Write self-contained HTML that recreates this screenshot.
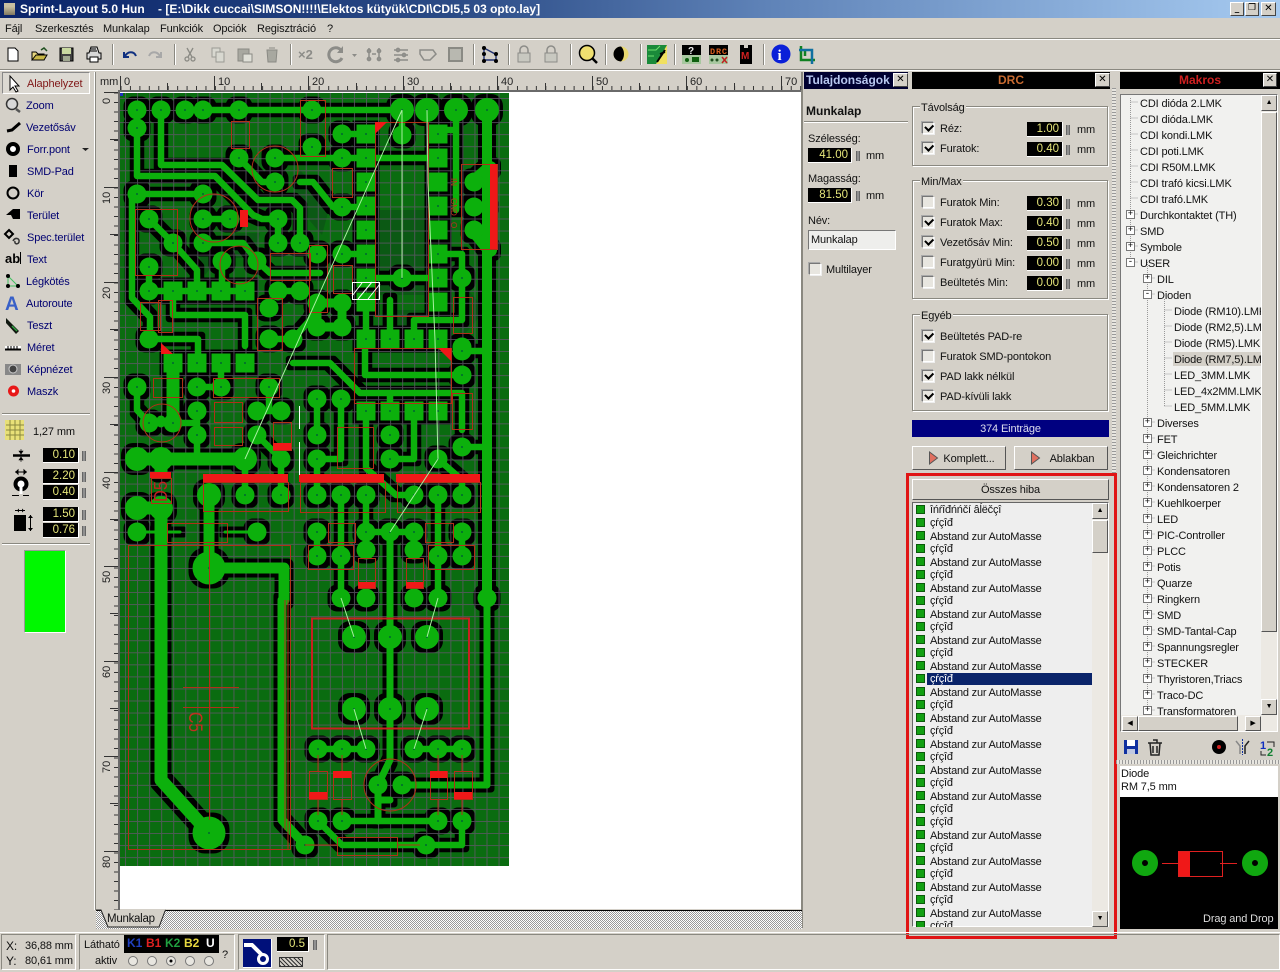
<!DOCTYPE html>
<html><head><meta charset="utf-8"><title>Sprint-Layout</title>
<style>
html,body{margin:0;padding:0;width:1280px;height:972px;overflow:hidden;background:#d4d0c8}
body{position:relative;font:11px "Liberation Sans",sans-serif;letter-spacing:-.13px;color:#111}
svg text{letter-spacing:0}
.t{position:absolute;white-space:nowrap;line-height:14px;margin-top:1px}
.b{position:absolute;box-sizing:border-box}
.n{color:#000070}
.f{position:absolute;box-sizing:border-box;background:#000;color:#e6e67a;text-align:right;padding-right:3px;font-size:11.5px;line-height:15px;height:15px;border-right:1px solid #fff;border-bottom:1px solid #fff;letter-spacing:0}
.s{position:absolute;width:4px;height:10px;margin-top:1px;background:linear-gradient(90deg,#666 0,#666 40%,#bbb 40%,#bbb 60%,#666 60%)}
.c{position:absolute;box-sizing:border-box;width:12px;height:12px;background:#e8e6e0;border:1px solid;border-color:#777 #fff #fff #777;box-shadow:-1px -1px 0 #aaa,1px 1px 0 #eee}
.c.k:after{content:"";position:absolute;left:1.5px;top:.5px;width:6px;height:3.5px;border:solid #000;border-width:0 0 2px 2px;transform:rotate(-45deg)}
.g{position:absolute;box-sizing:border-box;border:1px solid #8a8880;box-shadow:1px 1px 0 #fff,inset 1px 1px 0 #fff}
.lg{position:absolute;background:#d4d0c8;padding:0 1px;line-height:13px;white-space:nowrap;margin-top:1px}
.btn{position:absolute;box-sizing:border-box;background:#d4d0c8;border:1px solid;border-color:#fff #555 #555 #fff;text-align:center}
.l{position:absolute;left:930px;line-height:13px;white-space:nowrap;font-size:11px;letter-spacing:-.22px;color:#111;margin-top:1px}
.q{position:absolute;left:916px;width:9px;height:9px;background:#12a012;box-shadow:inset 0 0 0 1px #0a5a0a}
.h{position:absolute;height:17px;background:#000;font-weight:bold;text-align:center;line-height:16px;font-size:12px;letter-spacing:0}
.x{position:absolute;width:15px;height:14px;background:#d4d0c8;box-sizing:border-box;border:1px solid;border-color:#fff #444 #444 #fff;color:#000;font:bold 10px/12px "DejaVu Sans",sans-serif;text-align:center;letter-spacing:0}
.tr{position:absolute;left:1140px;line-height:14px;white-space:nowrap;font-size:11px;color:#111;margin-top:1px}
.pl{position:absolute;box-sizing:border-box;width:9px;height:9px;border:1px solid #777;background:#fff;font:9px/7px "Liberation Mono",monospace;text-align:center;color:#000;letter-spacing:0}
.sb{position:absolute;box-sizing:border-box;background:#d4d0c8;border:1px solid;border-color:#fff #555 #555 #fff;color:#000;font-size:7px;line-height:13px;text-align:center}
</style></head><body>

<!-- title bar -->
<div class="b" style="left:0;top:0;width:1280px;height:18px;background:linear-gradient(90deg,#0a246a 0,#2a4a85 35%,#5f83b8 60%,#a6caf0 100%)"></div>
<div class="t" style="left:20px;top:1px;color:#fff;font:bold 12px/14px 'Liberation Sans',sans-serif;letter-spacing:0;white-space:pre">Sprint-Layout 5.0 Hun    - [E:\Dikk cuccai\SIMSON!!!!\Elektos kütyük\CDI\CDI5,5 03 opto.lay]</div>
<div class="b" style="left:4px;top:3px;width:11px;height:12px;background:linear-gradient(#c9c0a0 30%,#807860)"></div>
<div class="x" style="left:1230px;top:2px;width:14px;font-size:9px;line-height:13px">_</div>
<div class="x" style="left:1245px;top:2px;width:14px;font-size:9px;line-height:11px">❐</div>
<div class="x" style="left:1261px;top:2px;width:15px">✕</div>

<!-- menu -->
<div class="t" style="left:5px;top:21px">Fájl</div>
<div class="t" style="left:35px;top:21px">Szerkesztés</div>
<div class="t" style="left:103px;top:21px">Munkalap</div>
<div class="t" style="left:160px;top:21px">Funkciók</div>
<div class="t" style="left:213px;top:21px">Opciók</div>
<div class="t" style="left:257px;top:21px">Regisztráció</div>
<div class="t" style="left:327px;top:21px">?</div>
<div class="b" style="left:0;top:38px;width:1280px;height:2px;border-top:1px solid #8a8880;border-bottom:1px solid #fff"></div>
<div class="b" style="left:0;top:69px;width:1280px;height:2px;border-top:1px solid #8a8880;border-bottom:1px solid #fff"></div>

<!-- canvas -->
<div class="b" style="left:120px;top:92px;width:682px;height:817px;background:#fff"></div>
<div class="b" style="left:118px;top:90px;width:684px;height:2px;background:#6a6a6a"></div>
<div class="b" style="left:118px;top:90px;width:2px;height:820px;background:#6a6a6a"></div>
<div class="b" style="left:95px;top:72px;width:1px;height:838px;background:#8a8880;box-shadow:-1px 0 0 #fff"></div>
<div class="b" style="left:801px;top:72px;width:2px;height:856px;background:#8a8880"></div>

<svg width="1280" height="972" style="position:absolute;left:0;top:0">
<defs>
<clipPath id="bc"><rect x="120" y="93" width="389" height="773"/></clipPath>
<pattern id="gr" x="125" y="98" width="12.05" height="12.05" patternUnits="userSpaceOnUse"><path d="M.5 0V12.05M0 .5H12.05" stroke="#5f5868" stroke-opacity=".8" stroke-width="1" fill="none"/></pattern>
<pattern id="ht" width="2" height="2" patternUnits="userSpaceOnUse"><rect width="2" height="2" fill="#fff"/><rect width="1" height="1" fill="#999"/><rect x="1" y="1" width="1" height="1" fill="#999"/></pattern>
<pattern id="mt" width="9.44" height="4" x="120.5" y="86" patternUnits="userSpaceOnUse"><rect width="1" height="4" fill="#333"/></pattern>
<pattern id="mv" width="4" height="9.5" x="114" y="92.5" patternUnits="userSpaceOnUse"><rect width="4" height="1" fill="#333"/></pattern>
<filter id="halo" filterUnits="userSpaceOnUse" x="100" y="80" width="430" height="800"><feMorphology in="SourceAlpha" operator="dilate" radius="4" result="d"/><feFlood flood-color="#000"/><feComposite in2="d" operator="in"/></filter>
<g id="cu" fill="none" stroke="#0cb00c" stroke-linecap="round" stroke-linejoin="round">
<g stroke-width="6.5">
<path d="M203 110H312M312 110H402M161 110V165H222L258 200H292L300 208V243M137 128V176H215L253 215L262 219H278M137 194H203M132 197V298L150 317V339M149 219L173 243L197 270V291M203 219H230M239 158L262 182H275M275 158H342M203 243H243L257 261L270 273H320M222 261V291M278 219V243M149 267V291H173M173 291H245M173 291V315H245V346M149 339H198V358M278 291H300M269 339H293M293 339L310 320L317 303M300 182H313L333 207H342M342 134H366M342 158H438M342 207H366M342 254H366"/>
<path d="M293 363H330L360 393H452L462 393V430M462 447H487M462 351H487M462 375H365V348M390 393V411M366 411V468L396 495H414M414 411V459H390M341 399V459H317M317 399V435M317 459V495M341 495V598M366 495V532M438 459L462 480V495M438 495V598M317 532V556M366 532H414M366 532V550M414 532V550M462 532V556M402 110V135M456 110V210M456 130H438M366 278H438M438 254H462V278M462 278V320H414V339M390 300V339M366 302V339M137 387V410L149 423M173 363V423H197M197 411V459M197 387H221M221 363V387M257 411H281M269 387V411M257 435L281 459V495M245 459V495M318 749H366M414 749H462M342 821H438M318 821L342 845H462V821"/>
</g>
<g stroke-width="3"><path d="M137 532H180M225 532H257"/></g>
<path stroke-width="7" d="M390 532V760L378 785V821M378 800H390M402 785H487V598"/>
<path stroke-width="10" d="M487 110V598"/>
<path stroke-width="11" d="M209 495V568M209 568H284V600"/>
<path stroke-width="9" d="M282 600V820L305 845"/>
<path stroke-width="13" d="M137 459H245M161 459V472M161 508V780L209 833M137 508H161M173 363V420"/>
<path stroke-width="9" d="M474 207H490M161 420V423M317 303V327M342 303V327M317 303H342M317 327H342"/>
<path stroke-width="14" d="M474 182L490 168M474 230L490 250"/>
<!-- pads -->
<path stroke-width="19" d="M137 110h0M161 110h0M185 110h0M203 110h0M239 110h0M312 110h0M137 128h0M312 147h0M239 158h0M275 158h0M275 182h0M137 194h0M203 194h0M149 219h0M203 219h0M230 219h0M278 219h0M173 243h0M203 243h0M278 243h0M300 243h0M149 267h0M222 261h0M257 261h0M149 291h0M278 291h0M300 291h0M269 308h0M149 339h0M269 339h0M293 339h0M342 134h0M342 158h0M342 207h0M342 254h0M317 254h0M402 135h0M402 278h0M474 182h0M474 207h0M474 230h0M462 278h0M462 347h0M317 303h0M342 303h0M317 327h0M342 327h0M137 387h0M197 387h0M221 387h0M269 387h0M197 411h0M257 411h0M281 411h0M149 423h0M173 423h0M197 435h0M257 435h0M281 459h0M245 495h0M281 495h0M137 532h0M257 532h0M462 351h0M462 375h0M317 399h0M341 399h0M317 435h0M390 435h0M462 447h0M317 459h0M390 459h0M438 459h0M317 495h0M341 495h0M366 495h0M414 495h0M438 495h0M462 495h0M317 532h0M366 532h0M390 532h0M414 532h0M462 532h0M317 556h0M341 556h0M366 550h0M414 550h0M438 556h0M462 556h0M341 598h0M366 598h0M414 598h0M438 598h0M487 598h0M318 749h0M342 749h0M366 749h0M414 749h0M438 749h0M462 749h0M378 785h0M402 785h0M318 821h0M342 821h0M438 821h0M462 821h0M305 845h0M426 845h0"/>
<path stroke-width="24" d="M137 459h0M161 459h0M245 459h0M137 508h0M161 508h0M209 495h0M354 637h0M390 637h0M427 637h0M354 709h0M390 709h0M427 709h0M402 110h0M427 110h0M456 110h0M487 110h0"/>
<path stroke-width="33" d="M209 568h0M209 833h0"/>
<g stroke-linecap="square" stroke-width="19"><path d="M173 291h0M197 291h0M221 291h0M245 291h0M366 134h0M366 158h0M366 182h0M366 206h0M366 230h0M366 254h0M366 278h0M366 302h0M438 134h0M438 158h0M438 182h0M438 206h0M438 230h0M438 254h0M438 278h0M438 302h0M366 339h0M390 339h0M414 339h0M438 339h0M173 363h0M197 363h0M221 363h0M245 363h0M366 411h0M390 411h0M414 411h0M438 411h0"/></g>
</g>
</defs>
<g clip-path="url(#bc)">
<rect x="120" y="93" width="389" height="773" fill="#0a6c10"/>
<path fill="#0b5914" d="M300 170l30 35-8 30-30-35zM380 210h45v85h-45zM232 233h28l-6 25h-22zM382 310h46v28h-46zM460 280l25 30-25 30zM195 240l30 10-20 25zM420 470l20 25-30 0z"/>
<use href="#cu" filter="url(#halo)"/>
<rect x="120" y="93" width="389" height="773" fill="url(#gr)"/>
<use href="#cu"/>
<path fill="none" stroke="#063" stroke-width="2" stroke-linecap="round" d="M137 110h0M161 110h0M185 110h0M203 110h0M239 110h0M312 110h0M137 128h0M312 147h0M239 158h0M275 158h0M275 182h0M137 194h0M203 194h0M149 219h0M203 219h0M230 219h0M278 219h0M173 243h0M203 243h0M278 243h0M300 243h0M149 267h0M149 291h0M173 291h0M197 291h0M221 291h0M245 291h0M366 134h0M366 158h0M366 182h0M366 206h0M366 230h0M366 254h0M366 278h0M438 134h0M438 158h0M438 206h0M438 254h0M438 278h0M366 339h0M390 339h0M414 339h0M438 339h0M402 110h0M427 110h0M456 110h0M487 110h0M342 134h0M342 158h0M342 207h0M342 254h0M317 254h0M402 278h0M462 278h0M173 363h0M197 363h0M221 363h0M245 363h0M366 411h0M390 411h0M414 411h0M438 411h0M137 387h0M197 387h0M221 387h0M269 387h0M197 411h0M149 423h0M173 423h0M197 435h0M281 495h0M245 495h0M209 568h0M209 833h0M354 637h0M390 637h0M427 637h0M354 709h0M390 709h0M427 709h0M318 749h0M342 749h0M366 749h0M414 749h0M438 749h0M462 749h0M378 785h0M402 785h0M318 821h0M342 821h0M438 821h0M462 821h0M305 845h0M426 845h0M317 495h0M341 495h0M366 495h0M414 495h0M438 495h0M462 495h0M317 532h0M366 532h0M390 532h0M414 532h0M462 532h0M317 556h0M341 556h0M438 556h0M462 556h0M462 351h0M462 375h0M317 399h0M341 399h0M317 435h0M390 435h0M462 447h0M317 459h0M390 459h0M438 459h0"/>
<!-- silk -->
<g fill="none" stroke="#b03018" stroke-width="1">
<path d="M231.500 121.500h18v27h-18zM300.500 100.500h25v56h-25zM135.500 209.500h42v66h-42zM140.500 302.500h20v28h-20zM257.500 298.500h25v52h-25zM270.500 253.500h40v27h-40zM158.500 300.500h14v32h-14zM332.500 168.500h20v29h-20zM461.500 164.500h36v85h-36zM375.500 122.500h53v194h-53zM453.500 297.500h19v36h-19zM309.500 245.500h18v67h-18zM333.500 265.500h19v28h-19z"/>
<path d="M153.500 378.500h29v19h-29zM213.500 378.500h66v19h-66zM214.500 402.500h28v20h-28zM214.500 427.500h28v18h-28zM273.500 422.500h18v28h-18zM151.500 478.500h20v25h-20zM203.500 482.500h85v29h-85zM167.500 523.500h60v19h-60zM128.500 545.500h162v304h-162zM209.500 545V820M183 687.500h56M183 707.500h56M337.500 427.500h36v41h-36zM354.500 348.500h97v55h-97zM452.500 393.500h20v36h-20zM300.500 482.500h85v30h-85zM397.500 482.500h83v30h-83zM328.500 523.500h27v19h-27zM425.500 523.500h28v19h-28zM308.500 545.500h45v24h-45zM428.500 545.500h46v24h-46zM358.500 558.500h17v30h-17zM406.500 558.500h17v30h-17zM309.500 771.500h18v28h-18zM333.500 771.500h18v28h-18zM430.500 771.500h17v28h-17zM454.500 771.500h18v28h-18zM337.500 837.500h60v18h-60zM318 755v16M342 755v16M438 755v16M462 755v16M318 799v16M342 799v16M438 799v16M462 799v16M288 600V849M285 600V830M305 845H337M397 845H420"/>
<circle cx="275" cy="169" r="23"/><circle cx="214" cy="218" r="24"/><circle cx="239" cy="265" r="19"/><circle cx="162" cy="423" r="19"/><circle cx="390" cy="785" r="26"/>
</g>
<rect x="312" y="618.500" width="157" height="110" fill="none" stroke="#c82020" stroke-width="2"/>
<text transform="translate(189,712) rotate(90)" font-family="Liberation Sans" font-size="19" fill="#c03020" textLength="20" lengthAdjust="spacingAndGlyphs">C5</text>
<text transform="translate(167,502) rotate(-90)" font-family="Liberation Sans" font-size="18" fill="#c02020" textLength="21" lengthAdjust="spacingAndGlyphs">D5</text>
<text transform="translate(451,178) rotate(90)" font-family="Liberation Sans" font-size="8" fill="#c03020">IN</text>
<text transform="translate(451,198) rotate(90)" font-family="Liberation Sans" font-size="8" fill="#c03020">GND</text>
<text transform="translate(451,222) rotate(90)" font-family="Liberation Sans" font-size="8" fill="#c03020">O</text>
<g fill="#f01818">
<path d="M375 122h12l-12 12zM161 343v11h12zM438 348h13v13z"/>
<rect x="490" y="164" width="7" height="85"/><rect x="240" y="210" width="8" height="17"/>
<rect x="150" y="472" width="21" height="6"/><rect x="203" y="474" width="85" height="8"/><rect x="299" y="474" width="85" height="8"/><rect x="396" y="474" width="84" height="8"/>
<rect x="273" y="443" width="18" height="7"/><rect x="358" y="582" width="17" height="6"/><rect x="406" y="582" width="17" height="6"/>
<rect x="309" y="792" width="18" height="7"/><rect x="333" y="771" width="18" height="7"/><rect x="430" y="771" width="17" height="7"/><rect x="454" y="792" width="18" height="7"/>
</g>
<g fill="none" stroke="#a8f0a0" stroke-width="1">
<path d="M402 110L245 459M402 110V278M427 110L428 183L435 340L438 459L390 532M341 598L354 637M438 598L427 637M354 709L366 749M427 709L414 749"/>
</g>
<path d="M299.500 406V429M299.500 442V475" stroke="#fff" fill="none"/>
<g fill="none" stroke="#fff"><rect x="352.500" y="282.500" width="27" height="17"/><path d="M352 296l10-13M358 299l14-17M368 299l12-15"/></g>
<rect x="120" y="93" width="3" height="3" fill="#2030c0"/>
</g>

<!-- rulers -->
<rect x="120" y="86" width="682" height="4" fill="url(#mt)"/>
<g stroke="#333" fill="none"><path d="M120.500 76V90M214.500 76V90M308.500 76V90M403.500 76V90M497.500 76V90M592.500 76V90M686.500 76V90M781.500 76V90M167.500 83V90M261.500 83V90M356.500 83V90M450.500 83V90M545.500 83V90M639.500 83V90M734.500 83V90"/></g>
<g font-family="Liberation Sans" font-size="11" fill="#222"><text x="100" y="85">mm</text><text x="124" y="85">0</text><text x="218" y="85">10</text><text x="312" y="85">20</text><text x="407" y="85">30</text><text x="501" y="85">40</text><text x="596" y="85">50</text><text x="690" y="85">60</text><text x="785" y="85">70</text></g>
<rect x="114" y="92" width="4" height="818" fill="url(#mv)"/>
<g stroke="#333" fill="none"><path d="M104 92.500H118M104 187.500H118M104 282.500H118M104 377.500H118M104 472.500H118M104 566.500H118M104 661.500H118M104 756.500H118M104 851.500H118M110 139.500H118M110 234.500H118M110 329.500H118M110 424.500H118M110 519.500H118M110 613.500H118M110 708.500H118M110 803.500H118"/></g>
<g font-family="Liberation Sans" font-size="11" fill="#222">
<text transform="translate(110,104) rotate(-90)">0</text><text transform="translate(110,204) rotate(-90)">10</text><text transform="translate(110,299) rotate(-90)">20</text><text transform="translate(110,394) rotate(-90)">30</text><text transform="translate(110,489) rotate(-90)">40</text><text transform="translate(110,583) rotate(-90)">50</text><text transform="translate(110,678) rotate(-90)">60</text><text transform="translate(110,773) rotate(-90)">70</text><text transform="translate(110,868) rotate(-90)">80</text>
</g>

<!-- tab strip -->
<rect x="96" y="911" width="706" height="18" fill="url(#ht)"/>
<path d="M96 910.500H802" stroke="#000"/>
<path d="M96 910H101L108 927H159L165 911L166 910" fill="#d4d0c8" stroke="#222"/>
<text x="107" y="922" font-family="Liberation Sans" font-size="11.5" fill="#111" textLength="48">Munkalap</text>

<!-- toolbar icons -->
<g fill="none" stroke="#8a8880"><path d="M112.500 44V65M174.500 44V65M290.500 44V65M473.500 44V65M508.500 44V65M570.500 44V65M605.500 44V65M640.500 44V65M674.500 44V65M763.500 44V65"/></g>
<g fill="none" stroke="#fff"><path d="M113.500 44V65M175.500 44V65M291.500 44V65M474.500 44V65M509.500 44V65M571.500 44V65M606.500 44V65M641.500 44V65M675.500 44V65M764.500 44V65"/></g>
<path d="M8 48H15L18 51V61H8Z" fill="#fff" stroke="#000"/>
<path d="M32 52H36L38 54H44V60H32Z" fill="#e8d880" stroke="#000"/><path d="M32 60L36 55H47L44 60Z" fill="#c8b848" stroke="#000"/><path d="M41 50L44 48L47 51" fill="none" stroke="#205020" stroke-width="1.5"/>
<path d="M60 48H73V61H60Z" fill="#404040" stroke="#000"/><rect x="62" y="48" width="9" height="6" fill="#c8d8a0"/><rect x="63" y="56" width="7" height="5" fill="#a0a890"/>
<path d="M89 53L91 47H97L99 53H101V59H87V53Z" fill="#d8d8d8" stroke="#000"/><rect x="90" y="57" width="8" height="5" fill="#fff" stroke="#000"/><path d="M91 49h5M90 51h7" stroke="#000"/>
<path d="M124 52V57H129M125 56C128 51 134 51 136 56" fill="none" stroke="#103080" stroke-width="2"/>
<path d="M161 52V57H156M160 56C157 51 151 51 149 56" fill="none" stroke="#a8a8a8" stroke-width="2"/>
<g fill="none" stroke="#8a8a84" stroke-width="1.3"><path d="M187 48L192 57M193 48L188 57"/><circle cx="187" cy="59" r="2"/><circle cx="193" cy="59" r="2"/></g>
<g fill="#d8d8d0" stroke="#9a9a94"><rect x="212" y="48" width="8" height="9"/><rect x="216" y="52" width="8" height="10"/></g>
<g fill="#a8a8a0" stroke="#8a8a84"><rect x="238" y="49" width="11" height="12"/><rect x="243" y="54" width="9" height="8" fill="#e0e0d8"/></g>
<path d="M267 50H277L276 62H268ZM269 48H275" fill="#a8a8a0" stroke="#8a8a84"/>
<text x="298" y="59" font-family="Liberation Sans" font-weight="bold" font-size="13" fill="#8c8c88">×2</text>
<path d="M341 50A7 7 0 1 0 342 58" fill="none" stroke="#8c8c88" stroke-width="3"/><path d="M343 46V53H337Z" fill="#8c8c88"/>
<path d="M352 54h5l-2.500 3z" fill="#8c8c88"/>
<g fill="none" stroke="#8c8c88" stroke-width="1.5"><path d="M369 48V61M379 48V61M372 54H376"/><circle cx="369" cy="51" r="1.600"/><circle cx="369" cy="59" r="1.600"/><circle cx="379" cy="51" r="1.600"/><circle cx="379" cy="59" r="1.600"/>
<path d="M394 50H408M394 55H408M394 60H408"/><circle cx="398" cy="50" r="1.600"/><circle cx="404" cy="55" r="1.600"/><circle cx="398" cy="60" r="1.600"/>
<path d="M420 50H433L436 54L430 60H424L420 54Z"/></g>
<rect x="448" y="47" width="15" height="15" fill="#8a8a84"/><rect x="450" y="49" width="11" height="11" fill="#b8b8b0"/>
<g stroke="#203070" stroke-width="1.400" fill="none"><path d="M484 48L497 55M484 60H496V55M484 48V60"/></g><g fill="#000"><circle cx="484" cy="48" r="2"/><circle cx="484" cy="54" r="2"/><circle cx="484" cy="61" r="2"/><circle cx="496" cy="54" r="2"/><circle cx="496" cy="61" r="2"/></g>
<g fill="#c8c8c0" stroke="#8c8c88"><rect x="518" y="53" width="12" height="9"/><path d="M520 53V50A4 4 0 0 1 528 50V53" fill="none" stroke-width="1.500"/><rect x="545" y="53" width="12" height="9"/><path d="M547 53V50A4 4 0 0 1 555 50V53" fill="none" stroke-width="1.500"/></g>
<circle cx="587" cy="53" r="7.500" fill="#f0e070" stroke="#000" stroke-width="1.500"/><path d="M592 58L597 63" stroke="#000" stroke-width="2.500"/>
<circle cx="621" cy="54" r="7.500" fill="#e8d870"/><path d="M621 46.500A7.500 7.500 0 0 0 621 61.500C625 58 625 50 621 46.500Z" fill="#000"/>
<rect x="647" y="45" width="20" height="19" fill="#1a8a3a"/><path d="M667 45V64H656Z" fill="#f0e060"/><path d="M648 50H656L660 46M648 56H654" stroke="#70e070" fill="none"/><path d="M657 62L665 50M660 54L665 52" stroke="#000" stroke-width="2" fill="none"/>
<rect x="682" y="45" width="19" height="19" fill="#000"/><rect x="682" y="55" width="19" height="9" fill="#a8c8a0"/><text x="688" y="54" font-family="Liberation Sans" font-weight="bold" font-size="10" fill="#f0f0f0">?</text><circle cx="687" cy="60" r="2" fill="#106010"/><rect x="692" y="57" width="7" height="5" fill="#106010"/>
<rect x="709" y="45" width="19" height="19" fill="#000"/><rect x="709" y="55" width="19" height="9" fill="#a8c8a0"/><text x="710" y="54" font-family="Liberation Mono" font-weight="bold" font-size="8.500" fill="#d86020" textLength="17">DRC</text><path d="M722 57L727 63M727 57L722 63" stroke="#c02020" stroke-width="1.500"/><circle cx="712" cy="60" r="1.500" fill="#205020"/><circle cx="717" cy="60" r="1.500" fill="#205020"/>
<path d="M740 45H744V48H748V45H752V64H740Z" fill="#000"/><text x="741" y="59" font-family="Liberation Sans" font-weight="bold" font-size="10" fill="#d02020">M</text>
<circle cx="781" cy="54" r="9.500" fill="#0a20d8"/><text x="777.500" y="60" font-family="Liberation Serif" font-weight="bold" font-size="15" fill="#fff">i</text>
<path d="M801 46V60H815M805 56V50" stroke="#108020" stroke-width="2.500" fill="none"/><path d="M799 50H812V64" stroke="#1070a0" stroke-width="2.500" fill="none"/>

<!-- left panel icons -->
<circle cx="12" cy="104" r="5.500" fill="#d8d8d8" stroke="#333" stroke-width="1.500"/><path d="M16 109L20 112" stroke="#555" stroke-width="2.500"/>
<path d="M7 131L12 130L20 123" stroke="#000" stroke-width="3" fill="none"/>
<circle cx="13" cy="149" r="5" fill="#fff" stroke="#000" stroke-width="4"/>
<rect x="9" y="165" width="8" height="12" fill="#000"/>
<circle cx="13" cy="193" r="5.500" fill="none" stroke="#000" stroke-width="2"/>
<path d="M6 215L13 209H20V219H13L11 215Z" fill="#000"/>
<path d="M9 230L13 234L9 238L5 234Z" fill="none" stroke="#000" stroke-width="2"/><path d="M13 241C15 237 20 238 19 242C18 245 14 244 15 241" fill="none" stroke="#333" stroke-width="1.500"/>
<text x="5" y="263" font-family="Liberation Sans" font-weight="bold" font-size="13" fill="#000">ab</text><path d="M20.500 252V264" stroke="#000"/>
<path d="M8 276L18 286H8Z" fill="none" stroke="#40c060"/><circle cx="8" cy="276" r="2" fill="#000"/><circle cx="8" cy="286" r="2" fill="#000"/><circle cx="18" cy="286" r="2" fill="#000"/>
<text x="5" y="310" font-family="Liberation Sans" font-weight="bold" font-size="19" fill="#3860c8">A</text>
<path d="M6 318L19 331L16 334L6 323Z" fill="#101810"/><path d="M12 326L17 331" stroke="#30a040" stroke-width="1.500"/>
<rect x="5" y="346" width="16" height="3" fill="#fff"/><path d="M5 349.500H21" stroke="#000" stroke-width="2"/><path d="M8 346v3M11 346v3M14 346v3M17 346v3" stroke="#000"/>
<rect x="5" y="364" width="16" height="11" fill="#888"/><circle cx="13" cy="369" r="4" fill="#444" stroke="#ccc"/>
<circle cx="13.500" cy="391" r="5.500" fill="#e81818"/><circle cx="13.500" cy="391" r="1.800" fill="#fff"/>
<path d="M82 148h7l-3.500 3z" fill="#222"/>
<rect x="5" y="420" width="19" height="20" fill="#e8e078"/><path d="M6 425H24M6 430H24M6 435H24M10 420V440M15 420V440M20 420V440" stroke="#8a8840" fill="none"/>
<path d="M13 455.500H30" stroke="#000" stroke-width="2.500"/><path d="M21 449V453M19 451H23L21 454Z M21 462V458M19 460H23L21 457Z" fill="#000" stroke="#000" stroke-width=".6"/>
<circle cx="21" cy="484" r="5.500" fill="#fff" stroke="#000" stroke-width="4"/><rect x="19.500" y="484" width="3" height="10" fill="#fff"/><path d="M15 472H27M16 472l2-2v4zM26 472l-2-2v4zM12 495.500H19M29 495.500H23" stroke="#000"/>
<rect x="14" y="515" width="12" height="16" fill="#000"/><path d="M15 510.500H25M30.500 515V531" stroke="#000"/><path d="M28 518h5l-2.500-3zM28 528h5l-2.500 3z" fill="#000"/><path d="M17 510.500l2-2v4zM24 510.500l-2-2v4z" fill="#000"/>
</svg>

<!-- left panel text -->
<div class="b" style="left:2px;top:72px;width:88px;height:22px;border:1px solid;border-color:#888 #fff #fff #888;background:#dcd9d2"></div>
<svg width="20" height="22" style="position:absolute;left:3px;top:73px"><path d="M7 3V17L10 14L13 19L15 18L12 13H16Z" fill="#fff" stroke="#000"/></svg>
<div class="t" style="left:27px;top:76px;color:#801818">Alaphelyzet</div>
<div class="t n" style="left:26px;top:98px">Zoom</div>
<div class="t n" style="left:26px;top:120px">Vezetősáv</div>
<div class="t n" style="left:27px;top:142px">Forr.pont</div>
<div class="t n" style="left:27px;top:164px">SMD-Pad</div>
<div class="t n" style="left:27px;top:186px">Kör</div>
<div class="t n" style="left:27px;top:208px">Terület</div>
<div class="t n" style="left:27px;top:230px">Spec.terület</div>
<div class="t n" style="left:27px;top:252px">Text</div>
<div class="t n" style="left:26px;top:274px">Légkötés</div>
<div class="t n" style="left:26px;top:296px">Autoroute</div>
<div class="t n" style="left:27px;top:318px">Teszt</div>
<div class="t n" style="left:27px;top:340px">Méret</div>
<div class="t n" style="left:27px;top:362px">Képnézet</div>
<div class="t n" style="left:27px;top:384px">Maszk</div>
<div class="b" style="left:2px;top:413px;width:88px;height:2px;border-top:1px solid #8a8880;border-bottom:1px solid #fff"></div>
<div class="t" style="left:33px;top:424px">1,27 mm</div>
<div class="f" style="left:43px;top:448px;width:36px">0.10</div><div class="s" style="left:82px;top:450px"></div>
<div class="f" style="left:43px;top:469px;width:36px">2.20</div><div class="s" style="left:82px;top:471px"></div>
<div class="f" style="left:43px;top:485px;width:36px">0.40</div><div class="s" style="left:82px;top:487px"></div>
<div class="f" style="left:43px;top:507px;width:36px">1.50</div><div class="s" style="left:82px;top:509px"></div>
<div class="f" style="left:43px;top:523px;width:36px">0.76</div><div class="s" style="left:82px;top:525px"></div>
<div class="b" style="left:2px;top:543px;width:88px;height:2px;border-top:1px solid #8a8880;border-bottom:1px solid #fff"></div>
<div class="b" style="left:25px;top:551px;width:41px;height:82px;background:#00f800;border-right:1px solid #fff;border-bottom:1px solid #fff;box-shadow:-1px -1px 0 #999"></div>

<!-- Properties panel -->
<div class="h" style="left:804px;top:72px;width:104px;background:#000030;color:#b8c8f0;text-align:left;padding-left:2px;box-sizing:border-box">Tulajdonságok</div>
<div class="x" style="left:893px;top:73px">✕</div>
<div class="t" style="left:806px;top:103px;font-weight:bold;font-size:12px;letter-spacing:0">Munkalap</div>
<div class="b" style="left:804px;top:121px;width:104px;height:2px;border-top:1px solid #8a8880;border-bottom:1px solid #fff"></div>
<div class="t" style="left:808px;top:131px">Szélesség:</div>
<div class="f" style="left:808px;top:148px;width:44px">41.00</div><div class="s" style="left:856px;top:150px"></div><div class="t" style="left:866px;top:148px">mm</div>
<div class="t" style="left:808px;top:171px">Magasság:</div>
<div class="f" style="left:808px;top:188px;width:44px">81.50</div><div class="s" style="left:856px;top:190px"></div><div class="t" style="left:866px;top:188px">mm</div>
<div class="t" style="left:808px;top:213px">Név:</div>
<div class="b" style="left:808px;top:230px;width:88px;height:20px;background:#eeeeec;border:1px solid;border-color:#777 #fff #fff #777;padding:2px 2px;line-height:14px">Munkalap</div>
<div class="c" style="left:809px;top:263px"></div>
<div class="t" style="left:826px;top:262px">Multilayer</div>

<!-- DRC -->
<div class="h" style="left:912px;top:72px;width:198px;color:#c86a30">DRC</div>
<div class="x" style="left:1095px;top:73px">✕</div>
<div class="g" style="left:912px;top:106px;width:196px;height:60px"></div><div class="lg" style="left:920px;top:101px">Távolság</div>
<div class="g" style="left:912px;top:180px;width:196px;height:119px"></div><div class="lg" style="left:920px;top:175px">Min/Max</div>
<div class="g" style="left:912px;top:314px;width:196px;height:97px"></div><div class="lg" style="left:920px;top:309px">Egyéb</div>

<div class="c k" style="left:922px;top:122px"></div><div class="t" style="left:940px;top:121px">Réz:</div><div class="f" style="left:1027px;top:122px;width:36px">1.00</div><div class="s" style="left:1066px;top:124px"></div><div class="t" style="left:1077px;top:122px">mm</div>
<div class="c k" style="left:922px;top:142px"></div><div class="t" style="left:940px;top:141px">Furatok:</div><div class="f" style="left:1027px;top:142px;width:36px">0.40</div><div class="s" style="left:1066px;top:144px"></div><div class="t" style="left:1077px;top:142px">mm</div>

<div class="c" style="left:922px;top:196px"></div><div class="t" style="left:940px;top:195px">Furatok Min:</div><div class="f" style="left:1027px;top:196px;width:36px">0.30</div><div class="s" style="left:1066px;top:198px"></div><div class="t" style="left:1077px;top:196px">mm</div>
<div class="c k" style="left:922px;top:216px"></div><div class="t" style="left:940px;top:215px">Furatok Max:</div><div class="f" style="left:1027px;top:216px;width:36px">0.40</div><div class="s" style="left:1066px;top:218px"></div><div class="t" style="left:1077px;top:216px">mm</div>
<div class="c k" style="left:922px;top:236px"></div><div class="t" style="left:940px;top:235px">Vezetősáv Min:</div><div class="f" style="left:1027px;top:236px;width:36px">0.50</div><div class="s" style="left:1066px;top:238px"></div><div class="t" style="left:1077px;top:236px">mm</div>
<div class="c" style="left:922px;top:256px"></div><div class="t" style="left:940px;top:255px">Furatgyürü Min:</div><div class="f" style="left:1027px;top:256px;width:36px">0.00</div><div class="s" style="left:1066px;top:258px"></div><div class="t" style="left:1077px;top:256px">mm</div>
<div class="c" style="left:922px;top:276px"></div><div class="t" style="left:940px;top:275px">Beültetés Min:</div><div class="f" style="left:1027px;top:276px;width:36px">0.00</div><div class="s" style="left:1066px;top:278px"></div><div class="t" style="left:1077px;top:276px">mm</div>

<div class="c k" style="left:922px;top:330px"></div><div class="t" style="left:940px;top:329px">Beültetés PAD-re</div>
<div class="c" style="left:922px;top:350px"></div><div class="t" style="left:940px;top:349px">Furatok SMD-pontokon</div>
<div class="c k" style="left:922px;top:370px"></div><div class="t" style="left:940px;top:369px">PAD lakk nélkül</div>
<div class="c k" style="left:922px;top:390px"></div><div class="t" style="left:940px;top:389px">PAD-kívüli lakk</div>

<div class="b" style="left:912px;top:420px;width:197px;height:17px;background:#000080;color:#dde;text-align:center;line-height:18px">374 Einträge</div>
<div class="btn" style="left:912px;top:446px;width:94px;height:24px;line-height:24px;padding-left:20px">Komplett...</div>
<div class="btn" style="left:1014px;top:446px;width:94px;height:24px;line-height:24px;padding-left:22px">Ablakban</div>
<svg width="200" height="24" style="position:absolute;left:912px;top:446px"><path d="M17.500 6V18L25.500 12Z" fill="#e07060" stroke="#555"/><path d="M119.500 6V18L127.500 12Z" fill="#e07060" stroke="#555"/></svg>

<!-- list -->
<div class="b" style="left:912px;top:502px;width:197px;height:425px;background:#eeeeee;border:1px solid;border-color:#666 #fff #fff #666"></div>
<div class="b" style="left:913px;top:503px;width:195px;height:424px;overflow:hidden">
<div style="position:relative;left:-913px;top:-503px;height:430px">
<div class="q" style="top:505px"></div><div class="l" style="top:503px">îńŕîđńńčí âĺëčçî</div>
<div class="q" style="top:518px"></div><div class="l" style="top:516px">çŕçîđ</div>
<div class="q" style="top:531px"></div><div class="l" style="top:530px">Abstand zur AutoMasse</div>
<div class="q" style="top:544px"></div><div class="l" style="top:542px">çŕçîđ</div>
<div class="q" style="top:557px"></div><div class="l" style="top:556px">Abstand zur AutoMasse</div>
<div class="q" style="top:570px"></div><div class="l" style="top:568px">çŕçîđ</div>
<div class="q" style="top:583px"></div><div class="l" style="top:582px">Abstand zur AutoMasse</div>
<div class="q" style="top:596px"></div><div class="l" style="top:594px">çŕçîđ</div>
<div class="q" style="top:609px"></div><div class="l" style="top:608px">Abstand zur AutoMasse</div>
<div class="q" style="top:622px"></div><div class="l" style="top:620px">çŕçîđ</div>
<div class="q" style="top:635px"></div><div class="l" style="top:634px">Abstand zur AutoMasse</div>
<div class="q" style="top:648px"></div><div class="l" style="top:646px">çŕçîđ</div>
<div class="q" style="top:661px"></div><div class="l" style="top:660px">Abstand zur AutoMasse</div>
<div class="b" style="left:927px;top:673px;width:165px;height:12px;background:#0a246a"></div>
<div class="q" style="top:674px"></div><div class="l" style="top:672px;color:#fff">çŕçîđ</div>
<div class="q" style="top:687px"></div><div class="l" style="top:686px">Abstand zur AutoMasse</div>
<div class="q" style="top:700px"></div><div class="l" style="top:698px">çŕçîđ</div>
<div class="q" style="top:713px"></div><div class="l" style="top:712px">Abstand zur AutoMasse</div>
<div class="q" style="top:726px"></div><div class="l" style="top:724px">çŕçîđ</div>
<div class="q" style="top:739px"></div><div class="l" style="top:738px">Abstand zur AutoMasse</div>
<div class="q" style="top:752px"></div><div class="l" style="top:750px">çŕçîđ</div>
<div class="q" style="top:765px"></div><div class="l" style="top:764px">Abstand zur AutoMasse</div>
<div class="q" style="top:778px"></div><div class="l" style="top:776px">çŕçîđ</div>
<div class="q" style="top:791px"></div><div class="l" style="top:790px">Abstand zur AutoMasse</div>
<div class="q" style="top:804px"></div><div class="l" style="top:802px">çŕçîđ</div>
<div class="q" style="top:817px"></div><div class="l" style="top:815px">çŕçîđ</div>
<div class="q" style="top:830px"></div><div class="l" style="top:829px">Abstand zur AutoMasse</div>
<div class="q" style="top:843px"></div><div class="l" style="top:841px">çŕçîđ</div>
<div class="q" style="top:856px"></div><div class="l" style="top:855px">Abstand zur AutoMasse</div>
<div class="q" style="top:869px"></div><div class="l" style="top:867px">çŕçîđ</div>
<div class="q" style="top:882px"></div><div class="l" style="top:881px">Abstand zur AutoMasse</div>
<div class="q" style="top:895px"></div><div class="l" style="top:893px">çŕçîđ</div>
<div class="q" style="top:908px"></div><div class="l" style="top:907px">Abstand zur AutoMasse</div>
<div class="q" style="top:921px"></div><div class="l" style="top:919px">çŕçîđ</div>
</div></div>
<div class="b" style="left:1092px;top:503px;width:16px;height:424px;background:#ece9e3"></div>
<div class="sb" style="left:1092px;top:503px;width:16px;height:16px">▲</div>
<div class="sb" style="left:1092px;top:520px;width:16px;height:33px"></div>
<div class="sb" style="left:1092px;top:911px;width:16px;height:16px">▼</div>
<div class="btn" style="left:912px;top:479px;width:197px;height:21px;line-height:20px">Összes hiba</div>

<!-- red frame -->
<div class="b" style="left:906px;top:473px;width:211px;height:466px;border:3px solid #e01414"></div>
<div class="b" style="left:1112px;top:88px;width:4px;height:385px;background:repeating-linear-gradient(0deg,#999 0,#999 1px,#e8e6e0 1px,#e8e6e0 3px)"></div>

<!-- Makros -->
<div class="h" style="left:1120px;top:72px;width:160px;color:#d02020">Makros</div>
<div class="x" style="left:1263px;top:73px;width:14px">✕</div>
<div class="b" style="left:1120px;top:94px;width:158px;height:638px;background:#f1f1ef;border:1px solid;border-color:#777 #fff #fff #777"></div>
<svg width="60" height="640" style="position:absolute;left:1120px;top:94px"><path d="M10.500 4V168" stroke="#999" stroke-dasharray="1 1" fill="none"/><path d="M10.500 8H18M10.500 24H18M10.500 40H18M10.500 56H18M10.500 72H18M10.500 88H18M10.500 104H18M10.500 120H18M10.500 136H18M10.500 152H18M10.500 168H18M27.500 168V620M27.500 184H35M27.500 200H35M27.500 328H35M27.500 344H35M27.500 360H35M27.500 376H35M27.500 392H35M27.500 408H35M27.500 424H35M27.500 440H35M27.500 456H35M27.500 472H35M27.500 488H35M27.500 504H35M27.500 520H35M27.500 536H35M27.500 552H35M27.500 568H35M27.500 584H35M27.500 600H35M27.500 616H35M44.500 205V312M44.500 216H52M44.500 232H52M44.500 248H52M44.500 264H52M44.500 280H52M44.500 296H52M44.500 312H52" stroke="#999" stroke-dasharray="1 1" fill="none"/></svg>
<div class="b" style="left:1121px;top:95px;width:140px;height:620px;overflow:hidden">
<div style="position:relative;left:-1121px;top:-95px">
<div class="tr" style="top:96px">CDI dióda 2.LMK</div>
<div class="tr" style="top:112px">CDI dióda.LMK</div>
<div class="tr" style="top:128px">CDI kondi.LMK</div>
<div class="tr" style="top:144px">CDI poti.LMK</div>
<div class="tr" style="top:160px">CDI R50M.LMK</div>
<div class="tr" style="top:176px">CDI trafó kicsi.LMK</div>
<div class="tr" style="top:192px">CDI trafó.LMK</div>
<div class="pl" style="left:1126px;top:210px">+</div><div class="tr" style="top:208px">Durchkontaktet (TH)</div>
<div class="pl" style="left:1126px;top:226px">+</div><div class="tr" style="top:224px">SMD</div>
<div class="pl" style="left:1126px;top:242px">+</div><div class="tr" style="top:240px">Symbole</div>
<div class="pl" style="left:1126px;top:258px">-</div><div class="tr" style="top:256px">USER</div>
<div class="pl" style="left:1143px;top:274px">+</div><div class="tr" style="top:272px;left:1157px">DIL</div>
<div class="pl" style="left:1143px;top:290px">-</div><div class="tr" style="top:288px;left:1157px">Dioden</div>
<div class="tr" style="top:304px;left:1174px">Diode (RM10).LMK</div>
<div class="tr" style="top:320px;left:1174px">Diode (RM2,5).LMK</div>
<div class="tr" style="top:336px;left:1174px">Diode (RM5).LMK</div>
<div class="b" style="left:1173px;top:352px;width:88px;height:14px;background:#d4d0c8"></div>
<div class="tr" style="top:352px;left:1174px">Diode (RM7,5).LMK</div>
<div class="tr" style="top:368px;left:1174px">LED_3MM.LMK</div>
<div class="tr" style="top:384px;left:1174px">LED_4x2MM.LMK</div>
<div class="tr" style="top:400px;left:1174px">LED_5MM.LMK</div>
<div class="pl" style="left:1143px;top:418px">+</div><div class="tr" style="top:416px;left:1157px">Diverses</div>
<div class="pl" style="left:1143px;top:434px">+</div><div class="tr" style="top:432px;left:1157px">FET</div>
<div class="pl" style="left:1143px;top:450px">+</div><div class="tr" style="top:448px;left:1157px">Gleichrichter</div>
<div class="pl" style="left:1143px;top:466px">+</div><div class="tr" style="top:464px;left:1157px">Kondensatoren</div>
<div class="pl" style="left:1143px;top:482px">+</div><div class="tr" style="top:480px;left:1157px">Kondensatoren 2</div>
<div class="pl" style="left:1143px;top:498px">+</div><div class="tr" style="top:496px;left:1157px">Kuehlkoerper</div>
<div class="pl" style="left:1143px;top:514px">+</div><div class="tr" style="top:512px;left:1157px">LED</div>
<div class="pl" style="left:1143px;top:530px">+</div><div class="tr" style="top:528px;left:1157px">PIC-Controller</div>
<div class="pl" style="left:1143px;top:546px">+</div><div class="tr" style="top:544px;left:1157px">PLCC</div>
<div class="pl" style="left:1143px;top:562px">+</div><div class="tr" style="top:560px;left:1157px">Potis</div>
<div class="pl" style="left:1143px;top:578px">+</div><div class="tr" style="top:576px;left:1157px">Quarze</div>
<div class="pl" style="left:1143px;top:594px">+</div><div class="tr" style="top:592px;left:1157px">Ringkern</div>
<div class="pl" style="left:1143px;top:610px">+</div><div class="tr" style="top:608px;left:1157px">SMD</div>
<div class="pl" style="left:1143px;top:626px">+</div><div class="tr" style="top:624px;left:1157px">SMD-Tantal-Cap</div>
<div class="pl" style="left:1143px;top:642px">+</div><div class="tr" style="top:640px;left:1157px">Spannungsregler</div>
<div class="pl" style="left:1143px;top:658px">+</div><div class="tr" style="top:656px;left:1157px">STECKER</div>
<div class="pl" style="left:1143px;top:674px">+</div><div class="tr" style="top:672px;left:1157px">Thyristoren,Triacs</div>
<div class="pl" style="left:1143px;top:690px">+</div><div class="tr" style="top:688px;left:1157px">Traco-DC</div>
<div class="pl" style="left:1143px;top:706px">+</div><div class="tr" style="top:704px;left:1157px">Transformatoren</div>
</div></div>
<div class="b" style="left:1261px;top:95px;width:16px;height:620px;background:#ece9e3"></div>
<div class="sb" style="left:1261px;top:95px;width:16px;height:16px">▲</div>
<div class="sb" style="left:1261px;top:112px;width:16px;height:520px"></div>
<div class="sb" style="left:1261px;top:699px;width:16px;height:16px">▼</div>
<div class="b" style="left:1121px;top:715px;width:156px;height:16px;background:#ece9e3"></div>
<div class="sb" style="left:1122px;top:716px;width:16px;height:15px">◀</div>
<div class="sb" style="left:1138px;top:716px;width:100px;height:15px"></div>
<div class="sb" style="left:1245px;top:716px;width:16px;height:15px">▶</div>
<svg width="160" height="20" style="position:absolute;left:1120px;top:738px">
<path d="M4 2H18V16H4Z" fill="#1030a0"/><rect x="7" y="2" width="8" height="6" fill="#fff"/><rect x="7" y="11" width="8" height="5" fill="#c0c8e0"/>
<path d="M28 5H42M30 5L31 17H39L40 5M33 2H37V5M33 8V15M37 8V15" fill="none" stroke="#222" stroke-width="1.500"/>
<circle cx="99" cy="9" r="7" fill="#000"/><circle cx="99" cy="9" r="2" fill="#d02020"/>
<path d="M116 3L120 8V16" fill="none" stroke="#888" stroke-width="1.500"/><path d="M129 3L125 8V16" fill="none" stroke="#222" stroke-width="1.500"/><path d="M122.500 1V17" stroke="#1030a0" stroke-dasharray="2 1"/>
<text x="140" y="11" font-family="Liberation Sans" font-weight="bold" font-size="11" fill="#1030c0">1</text><text x="147" y="18" font-family="Liberation Sans" font-weight="bold" font-size="11" fill="#108030">2</text><path d="M147 4H154V9M141 13V17H146" fill="none" stroke="#222"/>
</svg>
<div class="b" style="left:1116px;top:760px;width:164px;height:4px;background:repeating-linear-gradient(90deg,#999 0,#999 1px,#e8e6e0 1px,#e8e6e0 3px)"></div>
<div class="b" style="left:1120px;top:766px;width:158px;height:31px;background:#fff;line-height:13px;padding:2px 1px;font-size:11px">Diode<br>RM 7,5 mm</div>
<div class="b" style="left:1120px;top:797px;width:158px;height:132px;background:#000"></div>
<svg width="158" height="132" style="position:absolute;left:1120px;top:797px">
<path d="M42 66.500H58M100 66.500H117" stroke="#e02020" fill="none"/><rect x="58" y="54" width="12" height="25" fill="#f01818"/><rect x="58.500" y="54.500" width="44" height="25" fill="none" stroke="#e02020"/>
<circle cx="25" cy="66" r="8" fill="none" stroke="#10a810" stroke-width="10"/><circle cx="135" cy="66" r="8" fill="none" stroke="#10a810" stroke-width="10"/>
</svg>
<div class="t" style="left:1203px;top:911px;color:#ddd">Drag and Drop</div>

<!-- status -->
<div class="b" style="left:0;top:932px;width:1280px;height:1px;background:#fff"></div>
<div class="b" style="left:1px;top:934px;width:75px;height:36px;border:1px solid;border-color:#8a8880 #fff #fff #8a8880"></div>
<div class="b" style="left:79px;top:934px;width:156px;height:36px;border:1px solid;border-color:#8a8880 #fff #fff #8a8880"></div>
<div class="b" style="left:238px;top:934px;width:87px;height:36px;border:1px solid;border-color:#8a8880 #fff #fff #8a8880"></div>
<div class="b" style="left:327px;top:934px;width:953px;height:36px;border:1px solid;border-color:#8a8880 #fff #fff #8a8880"></div>
<div class="t" style="left:6px;top:938px;font-size:12px">X:</div><div class="t" style="left:25px;top:938px">36,88 mm</div>
<div class="t" style="left:6px;top:953px;font-size:12px">Y:</div><div class="t" style="left:25px;top:953px">80,61 mm</div>
<div class="t" style="left:84px;top:937px">Látható</div>
<div class="t" style="left:95px;top:953px">aktiv</div>
<div class="b" style="left:124px;top:935px;width:95px;height:18px;background:#000;font:bold 12px/17px 'Liberation Sans',sans-serif;white-space:nowrap;letter-spacing:0">
<span style="position:absolute;left:3px;color:#2040c0">K1</span><span style="position:absolute;left:22px;color:#e02020">B1</span><span style="position:absolute;left:41px;color:#20a040">K2</span><span style="position:absolute;left:60px;color:#e8d840">B2</span><span style="position:absolute;left:82px;color:#fff">U</span>
</div>
<svg width="100" height="16" style="position:absolute;left:124px;top:954px">
<g fill="#e8e6e0" stroke="#777"><circle cx="9" cy="7" r="4.500"/><circle cx="28" cy="7" r="4.500"/><circle cx="47" cy="7" r="4.500"/><circle cx="66" cy="7" r="4.500"/><circle cx="85" cy="7" r="4.500"/></g><circle cx="47" cy="7" r="1.500" fill="#000"/>
</svg>
<div class="t" style="left:222px;top:947px">?</div>
<div class="b" style="left:243px;top:939px;width:29px;height:29px;background:#00107a;border-right:1px solid #fff;border-bottom:1px solid #fff"></div>
<svg width="29" height="29" style="position:absolute;left:243px;top:939px"><path d="M1 6H9L20 17" fill="none" stroke="#fff" stroke-width="4"/><circle cx="20" cy="20" r="4.500" fill="#00107a" stroke="#fff" stroke-width="3"/></svg>
<div class="f" style="left:277px;top:937px;width:32px">0.5</div><div class="s" style="left:313px;top:939px"></div>
<div class="b" style="left:279px;top:957px;width:24px;height:10px;border:1px solid #333;background:repeating-linear-gradient(45deg,#333 0,#333 1px,#d4d0c8 1px,#d4d0c8 3px)"></div>
</body></html>
